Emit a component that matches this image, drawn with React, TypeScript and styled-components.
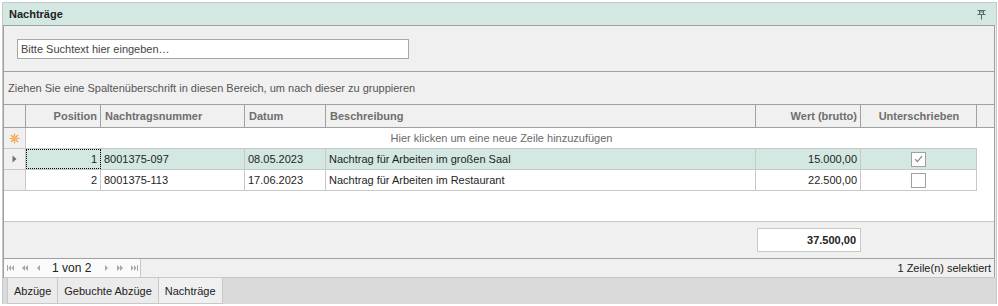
import React from 'react';
import styled, { createGlobalStyle } from 'styled-components';

const GlobalStyle = createGlobalStyle`
  body {
    margin: 0;
    background: #ffffff;
    font-family: "Liberation Sans", Arial, sans-serif;
    font-size: 11px;
    color: #1e1e1e;
  }
`;

const COLS = '22px 75px 144px 81px 430px 105px 116px';

interface Row {
  pos: number;
  nr: string;
  datum: string;
  text: string;
  wert: string;
  signed: boolean;
}

const rows: Row[] = [
  { pos: 1, nr: '8001375-097', datum: '08.05.2023', text: 'Nachtrag für Arbeiten im großen Saal', wert: '15.000,00', signed: true },
  { pos: 2, nr: '8001375-113', datum: '17.06.2023', text: 'Nachtrag für Arbeiten im Restaurant', wert: '22.500,00', signed: false },
];

const Panel = styled.div`
  margin: 2px 0 0 2px;
  width: 993px;
  height: 300px;
  border: 1px solid #c8c8c8;
  display: flex;
  flex-direction: column;
  background: #f0f0f0;
`;

const TitleBar = styled.div`
  height: 22px;
  flex: none;
  display: flex;
  align-items: center;
  justify-content: space-between;
  padding: 0 10px 0 6px;
  background: #d3e8e2;
  font-weight: bold;
  color: #222;
`;

const Body = styled.div`
  flex: none;
  border: 1px solid #a0a0a0;
  border-bottom: none;
  display: flex;
  flex-direction: column;
  width: 990px;
`;

const SearchArea = styled.div`
  height: 46px;
  padding: 13px 0 0 13px;
  box-sizing: border-box;
  border-bottom: 1px solid #a0a0a0;
`;

const SearchBox = styled.div`
  width: 387px;
  height: 18px;
  border: 1px solid #a8a8a8;
  background: #fff;
  display: flex;
  align-items: center;
  padding-left: 3px;
  color: #444;
`;

const GroupPanel = styled.div`
  height: 32px;
  display: flex;
  align-items: center;
  padding-left: 4px;
  color: #555;
  border-bottom: 1px solid #a0a0a0;
`;

const Grid = styled.div`
  display: flex;
  flex-direction: column;
  background: #fff;
`;

const HeaderRow = styled.div`
  display: grid;
  grid-template-columns: ${COLS} 1fr;
  height: 22px;
  background: #f0f0f0;
  border-bottom: 1px solid #a0a0a0;
`;

const HeadCell = styled.div<{ $align?: 'left' | 'right' | 'center' }>`
  border-right: 1px solid #a0a0a0;
  display: flex;
  align-items: center;
  justify-content: ${p => (p.$align === 'right' ? 'flex-end' : p.$align === 'center' ? 'center' : 'flex-start')};
  padding: 0 3px 0 4px;
  font-weight: bold;
  color: #6e6e6e;
  &:last-child {
    border-right: none;
  }
`;

const DataRow = styled.div<{ $selected?: boolean }>`
  display: grid;
  grid-template-columns: ${COLS};
  height: 20px;
  border-bottom: 1px solid #c8c8c8;
  width: 973px;
  background: ${p => (p.$selected ? '#d3e8e2' : '#fff')};
`;

const NewRow = styled.div`
  display: grid;
  grid-template-columns: 22px 1fr;
  height: 20px;
  width: 973px;
  border-bottom: 1px solid #c8c8c8;
`;

const Indicator = styled.div`
  background: #f0f0f0;
  border-right: 1px solid #c8c8c8;
  display: flex;
  align-items: center;
  justify-content: center;
`;

const Cell = styled.div<{ $align?: 'left' | 'right' | 'center'; $focus?: boolean }>`
  border-right: 1px solid #c8c8c8;
  display: flex;
  align-items: center;
  justify-content: ${p => (p.$align === 'right' ? 'flex-end' : p.$align === 'center' ? 'center' : 'flex-start')};
  padding: 0 3px;
  white-space: nowrap;
  overflow: hidden;
  outline: ${p => (p.$focus ? '1px dotted #000' : 'none')};
  outline-offset: -1px;
`;

const NewRowText = styled.div`
  display: flex;
  align-items: center;
  justify-content: center;
  color: #6a6a6a;
`;

const Check = styled.div`
  width: 13px;
  height: 13px;
  border: 1px solid #a0a0a0;
  background: #fff;
  display: flex;
  align-items: center;
  justify-content: center;
`;

const EmptySpace = styled.div`
  height: 30px;
`;

const Footer = styled.div`
  height: 36px;
  background: #f0f0f0;
  border-top: 1px solid #c8c8c8;
  border-bottom: 1px solid #a0a0a0;
  display: grid;
  grid-template-columns: 753px 104px;
  align-items: center;
`;

const TotalBox = styled.div`
  grid-column: 2;
  height: 22px;
  border: 1px solid #c8c8c8;
  background: #fff;
  display: flex;
  align-items: center;
  justify-content: flex-end;
  padding-right: 4px;
  font-weight: bold;
  color: #222;
`;

const StatusBar = styled.div`
  height: 18px;
  display: flex;
  align-items: stretch;
  justify-content: space-between;
  border-bottom: 1px solid #c8c8c8;
`;

const Navigator = styled.div`
  display: flex;
  align-items: center;
  gap: 7px;
  padding: 0 0 0 3px;
  width: 137px;
  box-sizing: border-box;
  background: #fafafa;
  border-right: 1px solid #c8c8c8;
  color: #222;
  font-size: 12px;
  white-space: nowrap;
  svg {
    flex: none;
  }
`;

const PageText = styled.span`
  flex: none;
  padding: 0 5px 0 3px;
`;

const StatusText = styled.div`
  display: flex;
  align-items: center;
  padding-right: 3px;
  color: #222;
`;

const TabStrip = styled.div`
  flex: 1;
  background: #dadada;
  display: flex;
  padding-left: 4px;
`;

const Tab = styled.div<{ $active?: boolean }>`
  height: 25px;
  padding: 0 6px;
  display: flex;
  align-items: center;
  background: ${p => (p.$active ? '#f0f0f0' : '#ebebeb')};
  border: 1px solid #c8c8c8;
  border-top: none;
  border-right: ${p => (p.$active ? '1px solid #c8c8c8' : 'none')};
  color: #222;
`;

const PinIcon = () => (
  <svg width="9" height="11" viewBox="0 0 9 11">
    <path d="M0.5 1.5h8M2.5 1.5v4M6.5 1.5v4M2.5 3h4M0.5 5.5h8M4.5 5.5v5" stroke="#5a6a66" strokeWidth="1" fill="none" />
  </svg>
);

const NewRowIcon = () => (
  <svg width="11" height="11" viewBox="0 0 11 11">
    <g stroke="#f5a04e" strokeWidth="1.2">
      <path d="M5.5 0.5v10M0.5 5.5h10M2 2l7 7M9 2l-7 7" />
    </g>
    <circle cx="5.5" cy="5.5" r="2.6" fill="#f7b46a" />
  </svg>
);

const RowArrow = () => (
  <svg width="5" height="8" viewBox="0 0 5 8">
    <path d="M0.5 0.5L4.5 4L0.5 7.5Z" fill="#707070" />
  </svg>
);

const CheckMark = () => (
  <svg width="9" height="8" viewBox="0 0 9 8">
    <path d="M1 4.2L3.4 6.6L8 1.2" stroke="#808080" strokeWidth="1.1" fill="none" />
  </svg>
);

type NavKind = 'first' | 'prevPage' | 'prev' | 'next' | 'nextPage' | 'last';

const NavIcon: React.FC<{ kind: NavKind }> = ({ kind }) => {
  const c = '#a8a8a8';
  const paths: Record<NavKind, React.ReactNode> = {
    first: (
      <>
        <rect x="0" y="1" width="1" height="6" fill={c} />
        <path d="M4 1L1.5 4L4 7Z M7 1L4.5 4L7 7Z" fill={c} />
      </>
    ),
    prevPage: <path d="M4 1L1 4L4 7Z M7 1L4 4L7 7Z" fill={c} />,
    prev: <path d="M5 1L2 4L5 7Z" fill={c} />,
    next: <path d="M2 1L5 4L2 7Z" fill={c} />,
    nextPage: <path d="M0 1L3 4L0 7Z M3 1L6 4L3 7Z" fill={c} />,
    last: (
      <>
        <path d="M0 1L2.5 4L0 7Z M3 1L5.5 4L3 7Z" fill={c} />
        <rect x="6" y="1" width="1" height="6" fill={c} />
      </>
    ),
  };
  return (
    <svg width="7" height="8" viewBox="0 0 7 8">
      {paths[kind]}
    </svg>
  );
};

export default function App() {
  return (
    <>
      <GlobalStyle />
      <Panel>
        <TitleBar>
          <span>Nachträge</span>
          <PinIcon />
        </TitleBar>
        <Body>
          <SearchArea>
            <SearchBox>Bitte Suchtext hier eingeben…</SearchBox>
          </SearchArea>
          <GroupPanel>Ziehen Sie eine Spaltenüberschrift in diesen Bereich, um nach dieser zu gruppieren</GroupPanel>
          <Grid>
            <HeaderRow>
              <HeadCell />
              <HeadCell $align="right">Position</HeadCell>
              <HeadCell>Nachtragsnummer</HeadCell>
              <HeadCell>Datum</HeadCell>
              <HeadCell>Beschreibung</HeadCell>
              <HeadCell $align="right">Wert (brutto)</HeadCell>
              <HeadCell $align="center">Unterschrieben</HeadCell>
              <HeadCell />
            </HeaderRow>
            <NewRow>
              <Indicator>
                <NewRowIcon />
              </Indicator>
              <NewRowText>Hier klicken um eine neue Zeile hinzuzufügen</NewRowText>
            </NewRow>
            {rows.map((r, i) => (
              <DataRow key={r.pos} $selected={i === 0}>
                <Indicator>{i === 0 && <RowArrow />}</Indicator>
                <Cell $align="right" $focus={i === 0}>{r.pos}</Cell>
                <Cell>{r.nr}</Cell>
                <Cell>{r.datum}</Cell>
                <Cell>{r.text}</Cell>
                <Cell $align="right">{r.wert}</Cell>
                <Cell $align="center">
                  <Check>{r.signed && <CheckMark />}</Check>
                </Cell>
              </DataRow>
            ))}
            <EmptySpace />
            <Footer>
              <TotalBox>37.500,00</TotalBox>
            </Footer>
          </Grid>
          <StatusBar>
            <Navigator>
              <NavIcon kind="first" />
              <NavIcon kind="prevPage" />
              <NavIcon kind="prev" />
              <PageText>1 von 2</PageText>
              <NavIcon kind="next" />
              <NavIcon kind="nextPage" />
              <NavIcon kind="last" />
            </Navigator>
            <StatusText>1 Zeile(n) selektiert</StatusText>
          </StatusBar>
        </Body>
        <TabStrip>
          <Tab>Abzüge</Tab>
          <Tab>Gebuchte Abzüge</Tab>
          <Tab $active>Nachträge</Tab>
        </TabStrip>
      </Panel>
    </>
  );
}
